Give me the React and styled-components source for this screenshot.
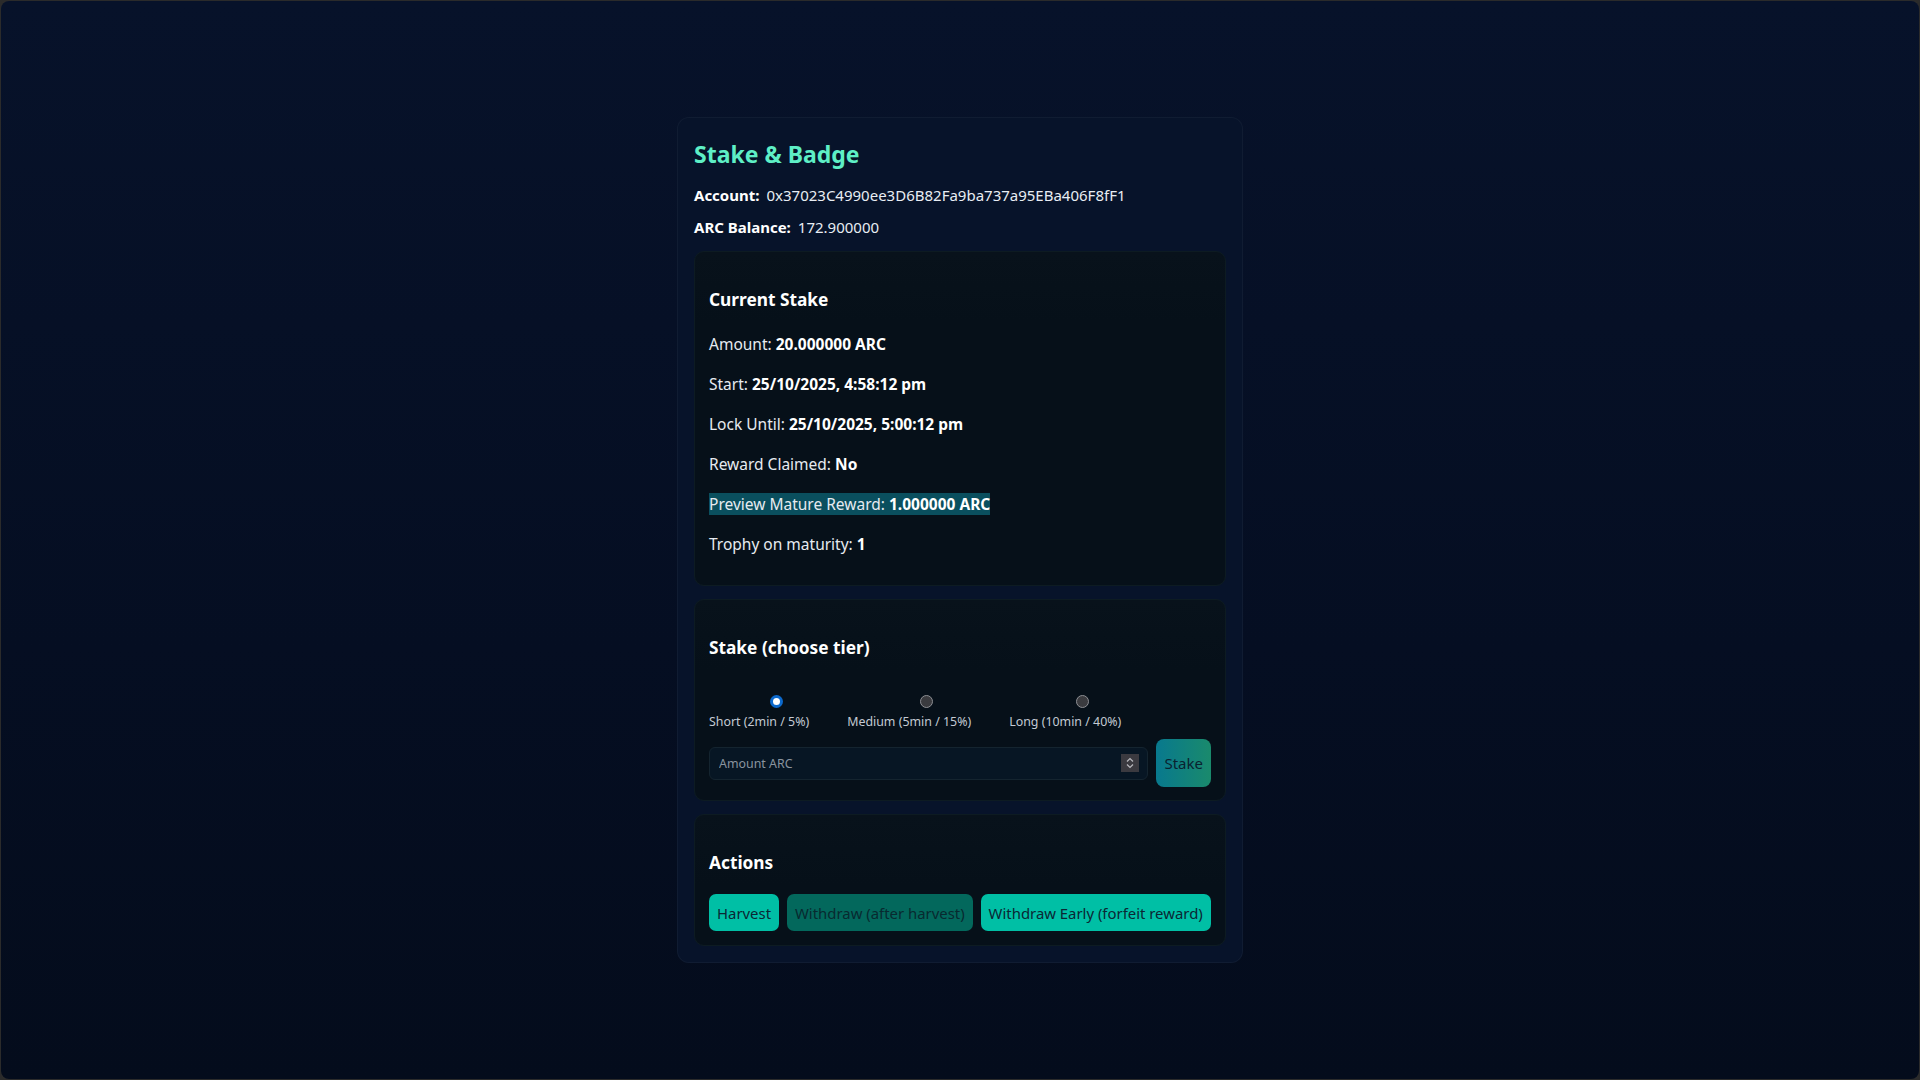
import styled, { createGlobalStyle } from "styled-components";

const GlobalStyle = createGlobalStyle`
    html, body {
        margin: 0;
        background: #2b2b2b;
    }
    body {
        font-family: "Segoe UI", "Noto Sans", sans-serif;
        color: #e6edf3;
    }
`

const Page = styled.div`
    box-sizing: border-box;
    height: calc(100vh - 2px);
    margin: 1px;
    border-radius: 8px;
    background: linear-gradient(180deg, #07122a 0%, #050e22 60%, #040c1c 100%);
    padding-top: 116px;
`

const Card = styled.div`
    box-sizing: border-box;
    width: 566px;
    margin: 0 auto;
    padding: 16px;
    background: #07132a;
    border: 1px solid rgba(255, 255, 255, 0.04);
    border-radius: 12px;
`

const Title = styled.h2`
    margin: 4px 0 13px;
    font-size: 23px;
    line-height: 32px;
    font-weight: 700;
    color: #5eefc6;
`

const InfoRow = styled.div`
    font-size: 15px;
    line-height: 24px;
    margin-top: 8px;
    color: #e8edf3;

    b {
        margin-right: 7px;
        color: #ffffff;
    }
`

const Panel = styled.section`
    margin-top: ${p => p.$first ? "12px" : "13px"};
    padding: 14px 14px ${p => p.$bottom || "14px"};
    background: linear-gradient(180deg, #08121b 0px, #061019 70px, #061019 100%);
    border: 1px solid #0d1b22;
    border-radius: 10px;
`

const SectionTitle = styled.h3`
    margin: 21px 0 ${p => p.$gap || "19px"};
    font-size: 17.3px;
    line-height: 26px;
    font-weight: 700;
    color: #ffffff;
`

const Line = styled.p`
    margin: 0 0 16px;
    font-size: 15.5px;
    line-height: 24px;
    color: #e6ebf0;

    &:last-child {
        margin-bottom: 15px;
    }

    b {
        color: #ffffff;
    }
`

const Mark = styled.span`
    background: #0a4f5e;
`

const Tiers = styled.div`
    display: flex;
    gap: 38px;
    margin-top: 31px;
`

const Tier = styled.label`
    display: flex;
    flex-direction: column;
    align-items: center;
    gap: 5px;
    font-size: 12.4px;
    line-height: 18px;
    color: #c3cad3;
    cursor: pointer;
`

const Radio = styled.input`
    appearance: none;
    box-sizing: border-box;
    width: 13px;
    height: 13px;
    margin: 3px 0 0 34px;
    border-radius: 50%;
    border: 1px solid #8d8f94;
    background: #3a3b3f;

    &:checked {
        border: 3px solid #0c69cc;
        background: #ffffff;
    }
`

const StakeRow = styled.div`
    display: flex;
    align-items: center;
    gap: 8px;
    margin-top: 8px;
`

const InputBox = styled.div`
    flex: 1;
    display: flex;
    align-items: center;
    box-sizing: border-box;
    height: 33px;
    padding: 0 8px 0 7px;
    background: #071624;
    border: 1px solid #14242f;
    border-radius: 6px;
`

const AmountInput = styled.input`
    flex: 1;
    min-width: 0;
    border: none;
    outline: none;
    background: transparent;
    font-family: inherit;
    font-size: 12.4px;
    color: #e6edf3;

    &::placeholder {
        color: #8a949f;
    }
`

const Spinner = styled.span`
    display: flex;
    align-items: center;
    justify-content: center;
    width: 18px;
    height: 18px;
    background: #3b3a40;
`

const StakeButton = styled.button`
    height: 48px;
    padding: 0 8px;
    border: none;
    border-radius: 8px;
    background: linear-gradient(90deg, #08798e 0%, #1a8a6c 100%);
    font-family: inherit;
    font-size: 15px;
    color: #0a2230;
    cursor: pointer;
`

const Actions = styled.div`
    display: flex;
    gap: 8px;
`

const ActionButton = styled.button`
    height: 37px;
    padding: 0 8px;
    border: none;
    border-radius: 7px;
    background: ${p => p.$dim ? "#03685c" : "#00bfa5"};
    font-family: inherit;
    font-size: 14.9px;
    color: ${p => p.$dim ? "#082a30" : "#0b2734"};
    cursor: pointer;
`

function App() {
    return (
        <>
            <GlobalStyle />
            <Page>
                <Card>
                    <Title>Stake &amp; Badge</Title>
                    <InfoRow><b>Account:</b>0x37023C4990ee3D6B82Fa9ba737a95EBa406F8fF1</InfoRow>
                    <InfoRow><b>ARC Balance:</b>172.900000</InfoRow>

                    <Panel $first>
                        <SectionTitle>Current Stake</SectionTitle>
                        <Line>Amount: <b>20.000000 ARC</b></Line>
                        <Line>Start: <b>25/10/2025, 4:58:12 pm</b></Line>
                        <Line>Lock Until: <b>25/10/2025, 5:00:12 pm</b></Line>
                        <Line>Reward Claimed: <b>No</b></Line>
                        <Line><Mark>Preview Mature Reward: <b>1.000000 ARC</b></Mark></Line>
                        <Line>Trophy on maturity: <b>1</b></Line>
                    </Panel>

                    <Panel $bottom="13px">
                        <SectionTitle $gap="0">Stake (choose tier)</SectionTitle>
                        <Tiers>
                            <Tier><Radio type="radio" name="tier" defaultChecked />Short (2min / 5%)</Tier>
                            <Tier><Radio type="radio" name="tier" />Medium (5min / 15%)</Tier>
                            <Tier><Radio type="radio" name="tier" />Long (10min / 40%)</Tier>
                        </Tiers>
                        <StakeRow>
                            <InputBox>
                                <AmountInput type="text" placeholder="Amount ARC" />
                                <Spinner>
                                    <svg width="8" height="12" viewBox="0 0 8 12" fill="none" stroke="#b9b9be" strokeWidth="1.2">
                                        <path d="M1 4.5 L4 1.5 L7 4.5" />
                                        <path d="M1 7.5 L4 10.5 L7 7.5" />
                                    </svg>
                                </Spinner>
                            </InputBox>
                            <StakeButton>Stake</StakeButton>
                        </StakeRow>
                    </Panel>

                    <Panel>
                        <SectionTitle $gap="18px">Actions</SectionTitle>
                        <Actions>
                            <ActionButton>Harvest</ActionButton>
                            <ActionButton $dim>Withdraw (after harvest)</ActionButton>
                            <ActionButton>Withdraw Early (forfeit reward)</ActionButton>
                        </Actions>
                    </Panel>
                </Card>
            </Page>
        </>
    )
}

export default App;
